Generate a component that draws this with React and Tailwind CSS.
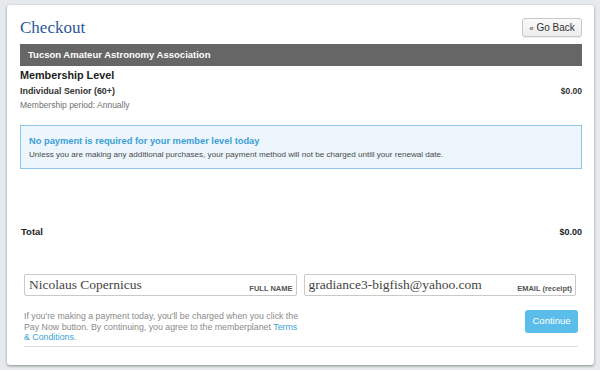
import React from "react";

const sans = "font-['Liberation_Sans',Arial,sans-serif]";
const serif = "font-['Liberation_Serif','Times_New_Roman',serif]";

function Field({ value, label }) {
    return (
        <div className="flex-1 h-[22px] flex items-end justify-between border border-[#c9c9c9] rounded-[2px] bg-white pl-[4px] pr-[3px]">
            <span className={`${serif} text-[13.5px] leading-[20px] text-[#444] self-center`}>{value}</span>
            <span className="text-[7.5px] font-bold text-[#555] leading-[10px] pb-[1px]">{label}</span>
        </div>
    );
}

function App() {
    return (
        <div className={`w-[600px] h-[370px] bg-[#e6eaec] pt-[5px] pl-[7px] ${sans}`}>
            <div className="w-[587px] h-[360px] bg-white rounded-[3px] shadow-[0_1px_3px_rgba(0,0,0,0.4)] pl-[13px] pr-[12px] pt-[13px]">
                <div className="flex justify-between items-start h-[19px]">
                    <h1 className={`${serif} text-[17px] leading-[19px] text-[#2b5797]`}>Checkout</h1>
                    <button className="h-[19px] w-[60px] rounded-[3px] border border-[#c8c8c8] bg-gradient-to-b from-[#fafafa] to-[#ececec] text-[10px] text-[#333] shadow-[0_1px_1px_rgba(0,0,0,0.08)]">
                        <span className="text-[8px]">«</span> Go Back
                    </button>
                </div>
                <div className="mt-[7px] h-[22px] bg-[#666] text-white text-[9.5px] font-bold leading-[22px] pl-[8px]">
                    Tucson Amateur Astronomy Association
                </div>
                <div className="text-[10.8px] font-bold text-[#222] leading-[16px] mt-[1px]">Membership Level</div>
                <div className="flex justify-between text-[8.9px] font-bold text-[#333] leading-[14px] mt-[1px]">
                    <span>Individual Senior (60+)</span>
                    <span className="text-[8.5px]">$0.00</span>
                </div>
                <div className="text-[8.5px] text-[#6f6f6f] leading-[14px]">Membership period: Annually</div>

                <div className="mt-[13px] h-[44px] border border-[#8ec8e6] bg-[#edf6fc] pl-[8px] pt-[8px]">
                    <div className="text-[9.3px] font-bold text-[#3b9fd6] leading-[14px]">
                        No payment is required for your member level today
                    </div>
                    <div className="text-[8.1px] text-[#4a4a4a] leading-[14px]">
                        Unless you are making any additional purchases, your payment method will not be charged untill your renewal date.
                    </div>
                </div>

                <div className="mt-[56px] flex justify-between text-[9px] font-bold text-[#222] leading-[14px] pl-[1px]">
                    <span className="text-[9.5px]">Total</span>
                    <span>$0.00</span>
                </div>

                <div className="mt-[35px] pl-[4px] pr-[6px]">
                    <div className="flex gap-[7px]">
                        <Field value="Nicolaus Copernicus" label="FULL NAME" />
                        <Field value="gradiance3-bigfish@yahoo.com" label="EMAIL (receipt)" />
                    </div>
                    <div className="flex justify-between items-start mt-[15px]">
                        <div className="w-[276px] text-[8.8px] leading-[10.5px] text-[#8a8a8a]">
                            <div>If you're making a payment today, you'll be charged when you click the</div>
                            <div>
                                Pay Now button. By continuing, you agree to the memberplanet{" "}
                                <span className="text-[#3b9fd6]">Terms</span>
                            </div>
                            <div>
                                <span className="text-[#3b9fd6]">&amp; Conditions</span>.
                            </div>
                        </div>
                        <button className="-mt-[1px] mr-[-2px] w-[53px] h-[23px] rounded-[3px] bg-[#5bbde9] text-white text-[9.5px]">
                            Continue
                        </button>
                    </div>
                    <div className="mt-[3px] h-[1px] bg-[#dedede] mr-[-2px]" />
                </div>
            </div>
        </div>
    );
}

export default App;
